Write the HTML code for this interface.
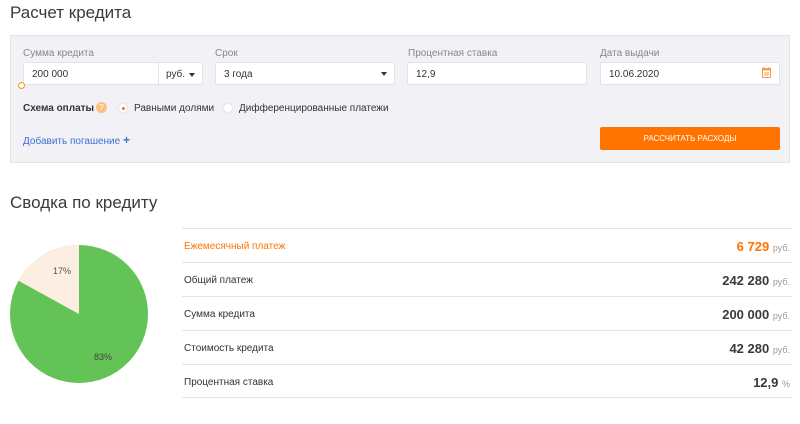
<!DOCTYPE html>
<html><head><meta charset="utf-8"><style>
*{box-sizing:border-box;margin:0;padding:0}
body{width:800px;height:424px;background:#fff;font-family:"Liberation Sans",sans-serif;color:#333;position:relative;overflow:hidden}
.a{position:absolute;white-space:nowrap}
.h{font-size:17px;color:#3a3a3a}
.panel{position:absolute;left:10px;top:35px;width:780px;height:128px;background:#f2f2f6;border:1px solid #e3e3ea}
.lbl{font-size:10px;color:#888}
.inp{position:absolute;background:#fff;border:1px solid #e2e2e8;border-radius:2px;height:23px;font-size:10px;color:#333;padding:6px 8px}
.caret{position:absolute;width:0;height:0;border-left:3.5px solid transparent;border-right:3.5px solid transparent;border-top:4px solid #333}
.row{position:absolute;left:182px;width:610px;height:34px;border-top:1px solid #e3e3ea;font-size:10px;color:#333}
.row .l{position:absolute;left:2px;top:12px}
.row .r{position:absolute;right:2px;top:10px;font-size:13px;font-weight:bold;color:#3a3a3a}
.row .r span{font-size:9px;font-weight:normal;color:#999}
</style></head><body>
<div class="a h" style="left:10px;top:3px">Расчет кредита</div>
<div class="panel"></div>
<div class="a lbl" style="left:23px;top:48px">Сумма кредита</div>
<div class="a lbl" style="left:215px;top:48px">Срок</div>
<div class="a lbl" style="left:408px;top:48px">Процентная ставка</div>
<div class="a lbl" style="left:600px;top:48px">Дата выдачи</div>
<div class="inp" style="left:23px;top:62px;width:180px">200 000</div>
<div class="a" style="left:158px;top:63px;width:1px;height:21px;background:#e2e2e8"></div>
<div class="a" style="left:166px;top:69px;font-size:10px">руб.</div>
<div class="caret" style="left:189px;top:73px"></div>
<div class="a" style="left:18px;top:82px;width:7px;height:7px;border:1.5px solid #f7941d;border-radius:50%;background:#fff"></div>
<div class="inp" style="left:215px;top:62px;width:180px">3 года</div>
<div class="caret" style="left:381px;top:72px"></div>
<div class="inp" style="left:407px;top:62px;width:180px">12,9</div>
<div class="inp" style="left:600px;top:62px;width:180px">10.06.2020</div>
<svg class="a" style="left:762px;top:67px" width="9" height="11" viewBox="0 0 9 11"><rect x="0.5" y="1.5" width="8" height="9" fill="none" stroke="#fa9a4a"/><rect x="0.5" y="1.5" width="8" height="2" fill="#fa9a4a"/><path d="M2 6h5M2 8h5" stroke="#fa9a4a"/><path d="M2 0v2M7 0v2" stroke="#fa9a4a"/></svg>
<div class="a" style="left:23px;top:103px;font-size:10px;font-weight:bold;color:#333">Схема оплаты</div>
<div class="a" style="left:96px;top:102px;width:11px;height:11px;border-radius:50%;background:#fbc17f;color:#fff;font-size:8px;text-align:center;line-height:11px">?</div>
<div class="a" style="left:118px;top:103px;width:10px;height:10px;border-radius:50%;background:#fff;border:1px solid #e6e6ea"></div>
<div class="a" style="left:121.5px;top:106.5px;width:3px;height:3px;border-radius:50%;background:#ff7300"></div>
<div class="a" style="left:134px;top:103px;font-size:10px">Равными долями</div>
<div class="a" style="left:223px;top:103px;width:10px;height:10px;border-radius:50%;background:#fff;border:1px solid #e6e6ea"></div>
<div class="a" style="left:239px;top:103px;font-size:10px">Дифференцированные платежи</div>
<div class="a" style="left:23px;top:133px;font-size:10px;color:#3d6fd6">Добавить погашение <b style="font-size:12px">+</b></div>
<div class="a" style="left:600px;top:127px;width:180px;height:23px;background:#ff7300;border-radius:2px;color:#fff;font-size:8px;text-align:center;line-height:23px">РАССЧИТАТЬ РАСХОДЫ</div>

<div class="a h" style="left:10px;top:193px">Сводка по кредиту</div>
<svg class="a" style="left:10px;top:245px" width="138" height="138" viewBox="0 0 138 138">
<circle cx="69" cy="69" r="69" fill="#63c356"/>
<path d="M69 69 L69 0 A69 69 0 0 0 8.5 35.8 Z" fill="#fdeee3"/>
<text x="43" y="29" font-size="9" fill="#555" font-family="Liberation Sans">17%</text>
<text x="84" y="115" font-size="9" fill="#444" font-family="Liberation Sans">83%</text>
</svg>
<div class="row" style="top:228px"><div class="l" style="color:#ff7300">Ежемесячный платеж</div><div class="r" style="color:#ff7300">6 729 <span>руб.</span></div></div>
<div class="row" style="top:262px"><div class="l">Общий платеж</div><div class="r">242 280 <span>руб.</span></div></div>
<div class="row" style="top:296px"><div class="l">Сумма кредита</div><div class="r">200 000 <span>руб.</span></div></div>
<div class="row" style="top:330px"><div class="l">Стоимость кредита</div><div class="r">42 280 <span>руб.</span></div></div>
<div class="row" style="top:364px;border-bottom:1px solid #e3e3ea"><div class="l">Процентная ставка</div><div class="r">12,9 <span>%</span></div></div>
</body></html>
